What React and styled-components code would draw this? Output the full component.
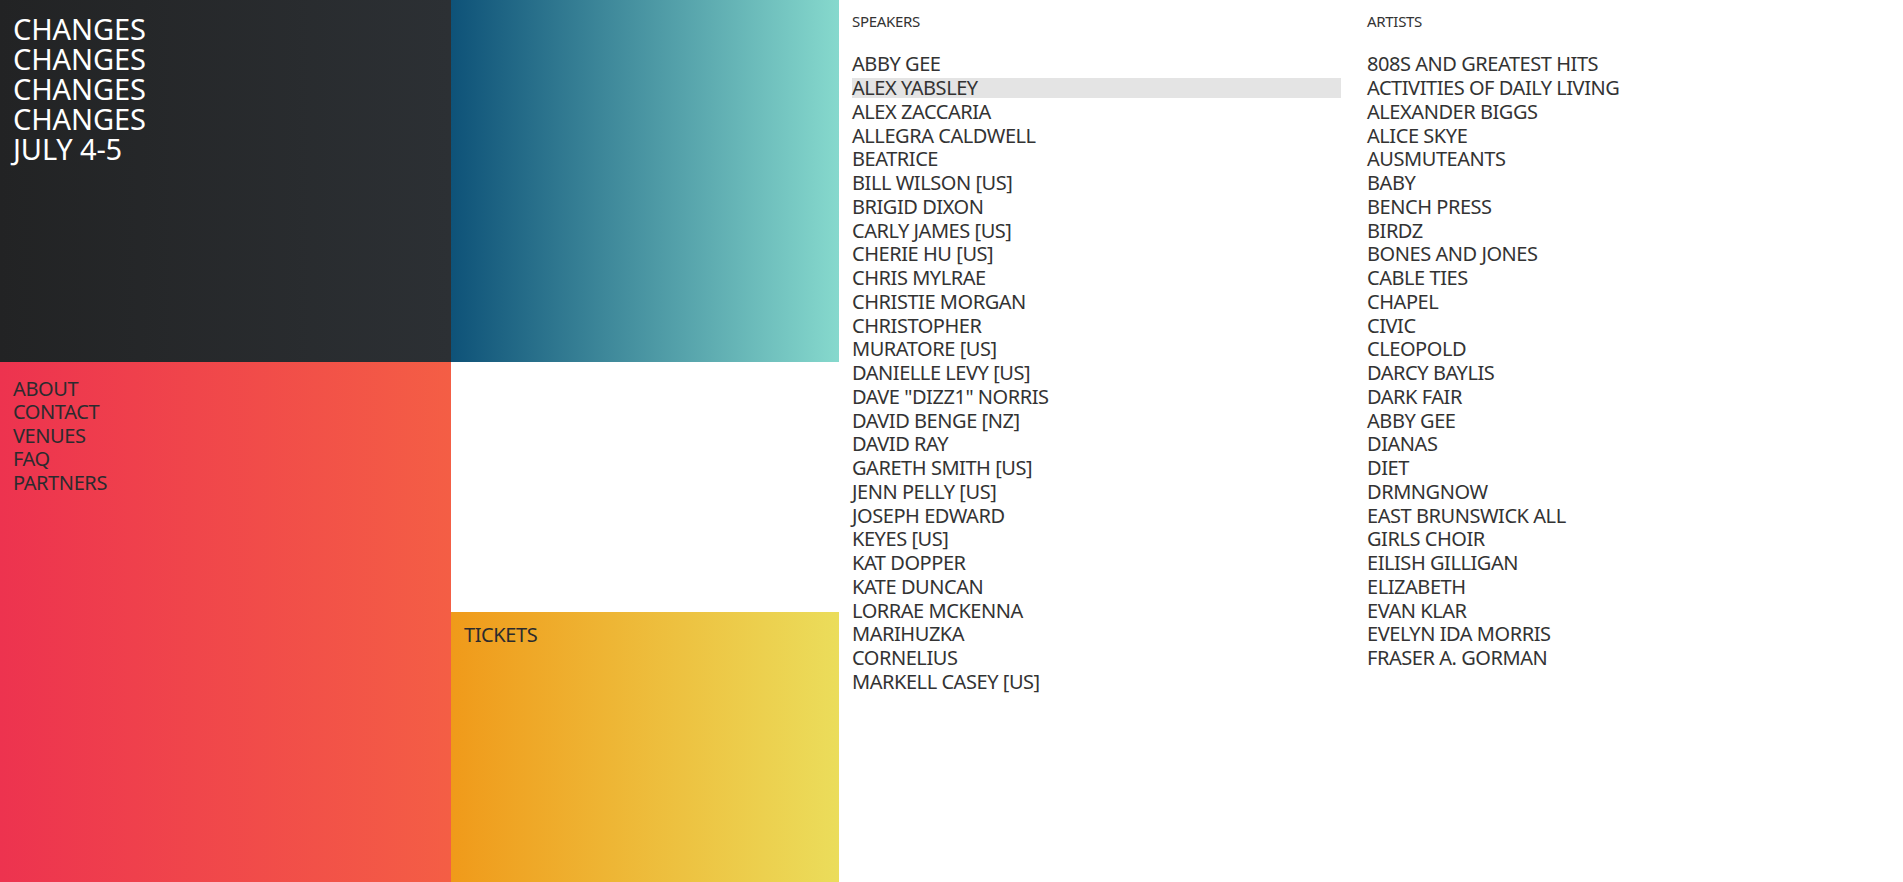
import React from "react";
import styled, { createGlobalStyle } from "styled-components";

const GlobalStyle = createGlobalStyle`
  html, body {
    margin: 0;
    padding: 0;
    height: 100%;
  }
  body {
    font-family: "Noto Sans", "Open Sans", sans-serif;
    color: #333;
  }
`;

const speakers = [
  "ABBY GEE", "ALEX YABSLEY", "ALEX ZACCARIA", "ALLEGRA CALDWELL", "BEATRICE",
  "BILL WILSON [US]", "BRIGID DIXON", "CARLY JAMES [US]", "CHERIE HU [US]",
  "CHRIS MYLRAE", "CHRISTIE MORGAN", "CHRISTOPHER", "MURATORE [US]",
  "DANIELLE LEVY [US]", 'DAVE "DIZZ1" NORRIS', "DAVID BENGE [NZ]", "DAVID RAY",
  "GARETH SMITH [US]", "JENN PELLY [US]", "JOSEPH EDWARD", "KEYES [US]",
  "KAT DOPPER", "KATE DUNCAN", "LORRAE MCKENNA", "MARIHUZKA", "CORNELIUS",
  "MARKELL CASEY [US]",
];

const artists = [
  "808S AND GREATEST HITS", "ACTIVITIES OF DAILY LIVING", "ALEXANDER BIGGS",
  "ALICE SKYE", "AUSMUTEANTS", "BABY", "BENCH PRESS", "BIRDZ", "BONES AND JONES",
  "CABLE TIES", "CHAPEL", "CIVIC", "CLEOPOLD", "DARCY BAYLIS", "DARK FAIR",
  "ABBY GEE", "DIANAS", "DIET", "DRMNGNOW", "EAST BRUNSWICK ALL", "GIRLS CHOIR",
  "EILISH GILLIGAN", "ELIZABETH", "EVAN KLAR", "EVELYN IDA MORRIS",
  "FRASER A. GORMAN",
];

const nav = ["ABOUT", "CONTACT", "VENUES", "FAQ", "PARTNERS"];

const S = {
  Page: styled.div`
    display: flex;
    height: 100vh;
    min-height: 882px;
    overflow: hidden;
  `,
  LeftCol: styled.div`
    display: flex;
    flex-direction: column;
    width: 451px;
    flex-shrink: 0;
  `,
  MidCol: styled.div`
    display: flex;
    flex-direction: column;
    width: 388px;
    flex-shrink: 0;
  `,
  Hero: styled.div`
    height: 362px;
    box-sizing: border-box;
    padding: 14px 13px;
    background: linear-gradient(to right, #222324, #2c3034);
    color: #fff;
    font-size: 29px;
    line-height: 30px;
    letter-spacing: -0.1px;
  `,
  Nav: styled.nav`
    flex: 1;
    box-sizing: border-box;
    padding: 15px 13px;
    background: linear-gradient(to right, #ed334f, #f45e45);
  `,
  NavLink: styled.a`
    display: block;
    font-size: 20px;
    line-height: 23.4px;
    letter-spacing: -0.4px;
    color: #2b2b2e;
    text-decoration: none;
  `,
  Teal: styled.div`
    height: 362px;
    background: linear-gradient(to right, #0e5278, #86d9cd);
  `,
  Blank: styled.div`
    flex: 1;
    background: #fff;
  `,
  Tickets: styled.div`
    height: 270px;
    box-sizing: border-box;
    padding: 11px 13px;
    background: linear-gradient(to right, #f09a1a, #ebdd5b);
    font-size: 20px;
    line-height: 23.4px;
    letter-spacing: -0.4px;
    color: #2b2b2e;
  `,
  Lists: styled.div`
    display: flex;
    flex: 1;
  `,
  Column: styled.section`
    width: 515px;
    box-sizing: border-box;
    padding: 12px 13px;
  `,
  Heading: styled.h2`
    margin: 0 0 24.3px;
    font-size: 15px;
    line-height: 18px;
    font-weight: 400;
    letter-spacing: -0.3px;
    color: #333;
  `,
  List: styled.ul`
    list-style: none;
    margin: 0;
    padding: 0;
  `,
  Item: styled.li`
    font-size: 20px;
    line-height: 20px;
    height: 20px;
    margin-bottom: 3.76px;
    letter-spacing: -0.45px;
    color: #333;
    white-space: nowrap;
    background: ${(p) => (p.$active ? "#e4e4e4" : "transparent")};
  `,
};

const NameList = ({ title, names, active }) => (
  <S.Column>
    <S.Heading>{title}</S.Heading>
    <S.List>
      {names.map((n, i) => (
        <S.Item key={i} $active={i === active}>
          {n}
        </S.Item>
      ))}
    </S.List>
  </S.Column>
);

const App = () => {
  return (
    <>
      <GlobalStyle />
      <S.Page>
        <S.LeftCol>
          <S.Hero>
            CHANGES
            <br />
            CHANGES
            <br />
            CHANGES
            <br />
            CHANGES
            <br />
            JULY 4-5
          </S.Hero>
          <S.Nav>
            {nav.map((n) => (
              <S.NavLink key={n} href="#">
                {n}
              </S.NavLink>
            ))}
          </S.Nav>
        </S.LeftCol>
        <S.MidCol>
          <S.Teal />
          <S.Blank />
          <S.Tickets>TICKETS</S.Tickets>
        </S.MidCol>
        <S.Lists>
          <NameList title="SPEAKERS" names={speakers} active={1} />
          <NameList title="ARTISTS" names={artists} />
        </S.Lists>
      </S.Page>
    </>
  );
};

export default App;
